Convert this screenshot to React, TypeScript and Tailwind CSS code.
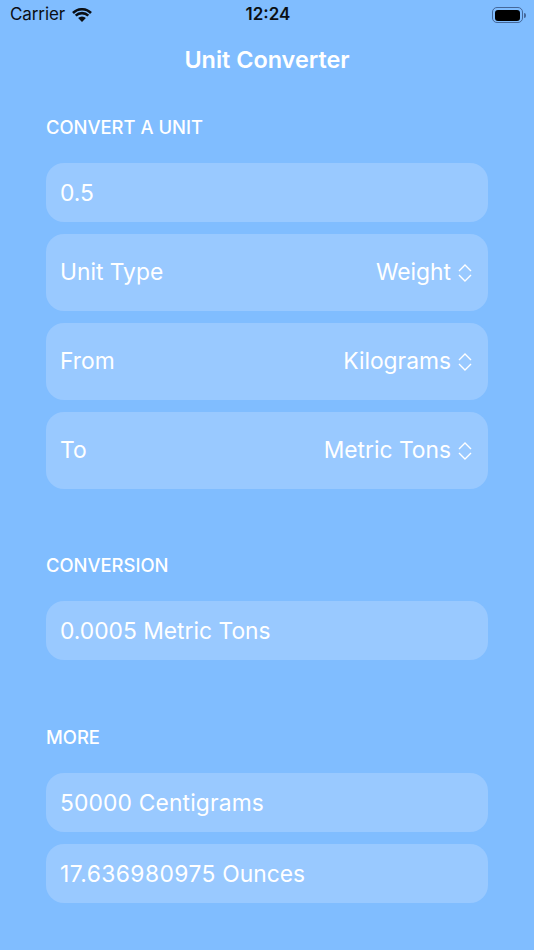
function Chevrons() {
  return (
    <svg width="14" height="18" viewBox="0 0 14 18" fill="none" stroke="white" strokeWidth="1.4" className="ml-[7px]">
      <path d="M1 7 L7 1 L13 7" />
      <path d="M1 11 L7 17 L13 11" />
    </svg>
  );
}

function Row({ children }: { children: React.ReactNode }) {
  return (
    <div className="h-[59px] rounded-[18px] bg-[#99c9ff] pl-[14px] pr-[15px] pt-[2px] flex items-center text-[22.8px] text-white whitespace-pre">
      {children}
    </div>
  );
}

function PickerRow({ label, value }: { label: string; value: string }) {
  return (
    <div className="h-[77px] rounded-[18px] bg-[#99c9ff] pl-[14px] pr-[16px] flex items-center justify-between text-[22.8px] text-white">
      <span>{label}</span>
      <span className="flex items-center">
        {value}
        <Chevrons />
      </span>
    </div>
  );
}

function Heading({ children }: { children: React.ReactNode }) {
  return <h2 className="text-[18.4px] leading-[22px] font-medium text-white uppercase">{children}</h2>;
}

export default function App() {
  return (
    <div className="w-[534px] h-[950px] bg-[#80bdff] overflow-hidden font-['Inter',sans-serif]">
      {/* status bar */}
      <div className="h-[30px] flex items-center justify-between pl-[10px] pr-[8px] text-[#0b0f14]">
        <div className="flex items-center gap-[7px] w-[120px]">
          <span className="text-[17px] tracking-[-0.1px]">Carrier</span>
          <svg width="20" height="14" viewBox="0 0 20 14" fill="none" stroke="#0b0f14">
            <path d="M1 5 A12.75 12.75 0 0 1 19 5" strokeWidth="2.6" />
            <path d="M3.7 7.7 A8.9 8.9 0 0 1 16.3 7.7" strokeWidth="2.6" />
            <path d="M10 14 L6.1 10.1 A5.5 5.5 0 0 1 13.9 10.1 Z" fill="#0b0f14" stroke="none" />
          </svg>
        </div>
        <span className="text-[17px] font-semibold">12:24</span>
        <div className="w-[120px] flex justify-end">
          <div className="flex items-center">
            <div className="w-[31px] h-[16px] rounded-[5px] border border-[#45689a] pl-[1.5px] pr-[2.5px] py-[1.5px]">
              <div className="w-full h-full rounded-[3px] bg-black" />
            </div>
            <div className="w-[1.5px] h-[5px] rounded-r-sm bg-[#45689a] ml-[1px]" />
          </div>
        </div>
      </div>

      {/* nav title */}
      <div className="h-[60px] flex items-center justify-center">
        <h1 className="text-[23.4px] font-semibold text-white">Unit Converter</h1>
      </div>

      <div className="px-[46px] pt-[26px]">
        <Heading>Convert a unit</Heading>
        <div className="mt-[25px] flex flex-col gap-[12px]">
          <Row>0.5</Row>
          <PickerRow label="Unit Type" value="Weight" />
          <PickerRow label="From" value="Kilograms" />
          <PickerRow label="To" value="Metric Tons" />
        </div>

        <div className="mt-[65px]">
          <Heading>Conversion</Heading>
        </div>
        <div className="mt-[25px]">
          <Row>0.0005 Metric Tons</Row>
        </div>

        <div className="mt-[66px]">
          <Heading>More</Heading>
        </div>
        <div className="mt-[25px] flex flex-col gap-[12px]">
          <Row><span className="tracking-[0.15px]">50000 Centigrams</span></Row>
          <Row><span className="tracking-[0.45px]">17.636980975</span> Ounces</Row>
        </div>
      </div>
    </div>
  );
}
